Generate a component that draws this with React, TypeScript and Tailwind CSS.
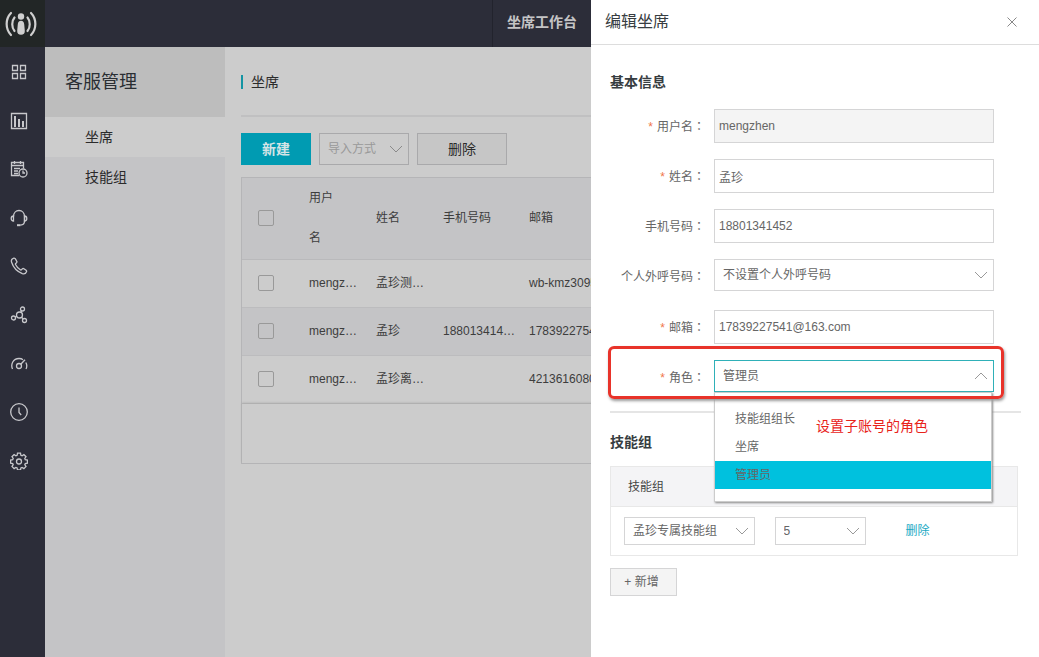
import { useState } from "react";
import type { ReactNode } from "react";

const agents = [
  { user: "mengzhen", shown: "mengz…", name: "孟珍测…", phone: "", email: "wb-kmz309541" },
  { user: "mengzhen2", shown: "mengz…", name: "孟珍", phone: "188013414…", email: "17839227541" },
  { user: "mengzhen3", shown: "mengz…", name: "孟珍离…", phone: "", email: "4213616080" },
];

const roles = ["技能组组长", "坐席", "管理员"];

function Chevron({ up = false }: { up?: boolean }) {
  return (
    <svg
      width="14"
      height="8"
      viewBox="0 0 14 8"
      fill="none"
      stroke="currentColor"
      className="pointer-events-none absolute right-1.5 top-1/2 -translate-y-1/2"
    >
      <path d={up ? "M1 7L7 1L13 7" : "M1 1L7 7L13 1"} />
    </svg>
  );
}

function Logo() {
  return (
    <svg width="32" height="26" viewBox="0 0 32 26" fill="none" stroke="#cfcfcf" strokeLinecap="round">
      <circle cx="16" cy="5.500" r="3.200" fill="#cfcfcf" stroke="none" />
      <path
        d="M16 9.800c2 0 3 1.400 3.200 3.400l.6 6.600c.2 2.400-1.300 4-3.800 4s-4-1.600-3.800-4l.6-6.600c.2-2 1.200-3.400 3.200-3.400z"
        fill="#cfcfcf"
        stroke="none"
      />
      <path d="M6 2C.2 8 .2 18 6 24M26 2c5.800 6 5.800 16 0 22" strokeWidth="2.200" />
      <path d="M9.500 6.500c-3 3.500-3 10 0 13.500M22.500 6.500c3 3.500 3 10 0 13.500" strokeWidth="2.200" />
    </svg>
  );
}

function Glyph({ children }: { children: ReactNode }) {
  return (
    <svg width="18" height="18" viewBox="0 0 18 18" fill="none" stroke="currentColor" strokeWidth="1.300">
      {children}
    </svg>
  );
}

const menu = [
  {
    label: "概览",
    icon: (
      <Glyph>
        <path d="M2.500 2.500h5v5h-5zM10.500 2.500h5v5h-5zM2.500 10.500h5v5h-5zM10.500 10.500h5v5h-5z" />
      </Glyph>
    ),
  },
  {
    label: "报表",
    icon: (
      <Glyph>
        <path d="M1.500 1.500h15v15h-15z" />
        <path d="M5 4v11M9 7v8M13 9v6" strokeWidth="2" />
      </Glyph>
    ),
  },
  {
    label: "记录",
    icon: (
      <Glyph>
        <path d="M9 15.500H1.500v-13h12v6M4.500 1v3M10.500 1v3M1.500 5.500h12M4 8.500h6M4 11h4M4 13.500h4" />
        <circle cx="13" cy="13" r="4" />
        <path d="M13 10.500V13h2" />
      </Glyph>
    ),
  },
  {
    label: "服务",
    icon: (
      <Glyph>
        <path d="M3.500 7.500C3.500 3.800 6 1.500 9 1.500s5.500 2.300 5.500 6v4.500c0 2.500-1.500 4-4 4" />
        <path d="M3.500 7v5C2 12 1.200 11 1.200 9.500S2 7 3.500 7zM14.500 7v5c1.500 0 2.300-1 2.300-2.500S16 7 14.500 7z" />
        <path d="M7 16.200h3.500" strokeWidth="2" />
      </Glyph>
    ),
  },
  {
    label: "电话",
    icon: (
      <Glyph>
        <path d="M3.200 1.300C1.600 2 1 3.400 1.600 5.200c1.600 5 5.500 9.200 10.700 11.400 1.800.6 3.500-.2 4.200-1.900.3-.7.1-1.100-.4-1.500l-2.200-1.500c-.6-.4-1.100-.3-1.600.2l-.8.9c-.4.300-.800.300-1.200 0-2.200-1.400-3.700-3.100-4.800-5.300-.2-.4-.1-.8.200-1.100l.8-.7c.5-.5.6-1 .2-1.600L5.200 1.700c-.5-.6-1.200-.8-2-.4z" />
      </Glyph>
    ),
  },
  {
    label: "路由",
    icon: (
      <Glyph>
        <circle cx="9.500" cy="9" r="3" />
        <circle cx="12.500" cy="3" r="2" />
        <circle cx="3.500" cy="12" r="2" />
        <circle cx="14.500" cy="14.500" r="2" />
        <path d="M10.800 6.300l.8-1.500M6.700 10.200l-1.400.8M11.600 11.200l1.500 1.700" />
      </Glyph>
    ),
  },
  {
    label: "监控",
    icon: (
      <Glyph>
        <path d="M2.500 14C.5 9.500 3 3.500 9 3.500c1.500 0 3 .4 4 1.200M15.800 7.500c1.200 2 1.200 4.500.2 6.500" />
        <circle cx="9" cy="11" r="2.500" />
        <path d="M10.800 9.200L15 4.800" />
      </Glyph>
    ),
  },
  {
    label: "历史",
    icon: (
      <Glyph>
        <circle cx="9" cy="9" r="8.300" />
        <path d="M9 4.500v5l2.200 2.500" />
      </Glyph>
    ),
  },
  {
    label: "设置",
    icon: (
      <Glyph>
        <path d="M7.500 1.200h3l.4 2.100 1.200.5 1.800-1.200 2.100 2.100-1.200 1.800.5 1.200 2.100.4v3l-2.100.4-.5 1.200 1.200 1.800-2.100 2.100-1.800-1.200-1.200.5-.4 2.100h-3l-.4-2.100-1.200-.5-1.800 1.200L2 14.500l1.200-1.800-.5-1.200-2.100-.4v-3l2.100-.4.500-1.200L2 4.700l2.100-2.100 1.800 1.200 1.200-.5z" />
        <circle cx="9" cy="9.500" r="2.500" />
      </Glyph>
    ),
  },
];

function Field({
  id,
  label,
  required = false,
  children,
}: {
  id: string;
  label: string;
  required?: boolean;
  children: ReactNode;
}) {
  return (
    <div className="flex h-[34px] items-start">
      <label htmlFor={id} className="w-[104px] shrink-0 pr-[9px] text-right leading-[34px]">
        {required && <span className="mr-1 text-[#f0764a]">*</span>}
        {label}
        <span className="font-['Noto_Sans_CJK_TC',sans-serif]">：</span>
      </label>
      {children}
    </div>
  );
}

const inputClass = "h-[34px] w-[280px] border border-[#d5d5d6] px-1 text-[#666] outline-none";

function Sidebar() {
  return (
    <aside className="w-[45px] shrink-0 bg-[#2c2d39]">
      <div className="flex h-[47px] items-center justify-center bg-[#222626] pr-1">
        <Logo />
      </div>
      <nav className="grid h-[438px] grid-rows-9 pt-px text-[#c8c8cc]">
        {menu.map((item) => (
          <a key={item.label} href="#" aria-label={item.label} className="flex items-center pl-2.5">
            {item.icon}
          </a>
        ))}
      </nav>
    </aside>
  );
}

function AgentTable() {
  return (
    <div className="mt-3 w-[800px] border border-[#b5b5b7]">
      <table className="w-full table-fixed text-left text-xs text-[#3d3d3d]">
        <colgroup>
          <col className="w-[51px]" />
          <col className="w-[67px]" />
          <col className="w-[67px]" />
          <col className="w-[86px]" />
          <col />
        </colgroup>
        <thead>
          <tr className="h-[81px] border-b border-[#b9b9bb] bg-[#c4c4c6]">
            <th className="pl-4">
              <input
                type="checkbox"
                aria-label="全选"
                className="block size-4 appearance-none rounded-xs border border-[#999]"
              />
            </th>
            <th className="pl-4 font-normal leading-10">
              用户
              <br />名
            </th>
            <th className="pl-4 font-normal">姓名</th>
            <th className="pl-4 font-normal">手机号码</th>
            <th className="pl-4 font-normal">邮箱</th>
          </tr>
        </thead>
        <tbody>
          {agents.map((agent) => (
            <tr key={agent.user} className="h-12 border-b border-[#bcbcbe] even:bg-[#c4c4c6]">
              <td className="pl-4">
                <input
                  type="checkbox"
                  aria-label={agent.user}
                  className="block size-4 appearance-none rounded-xs border border-[#999]"
                />
              </td>
              <td className="whitespace-nowrap pl-4">{agent.shown}</td>
              <td className="whitespace-nowrap pl-4">{agent.name}</td>
              <td className="whitespace-nowrap pl-4">{agent.phone}</td>
              <td className="whitespace-nowrap pl-4">{agent.email}</td>
            </tr>
          ))}
        </tbody>
      </table>
      <div className="h-[59px] shadow-[0_-1px_2px_#aaa]" />
    </div>
  );
}

function Console() {
  return (
    <div className="flex min-w-0 flex-1 flex-col overflow-hidden">
      <header className="flex h-[47px] shrink-0 justify-end bg-[#2c2d39]">
        <a
          href="#"
          className="flex items-center border-l border-[#22232d] px-3.5 pb-1 text-sm font-bold text-[#c4c4c6]"
        >
          坐席工作台
        </a>
      </header>
      <div className="flex flex-1">
        <nav className="w-[180px] shrink-0 bg-[#c4c4c6] text-sm text-[#2b2b2b]">
          <h2 className="flex h-[70px] items-center bg-[#bdbdbd] pl-5 text-lg text-[#2a2e33]">客服管理</h2>
          <a href="#" className="flex h-10 items-center bg-[#ccc] pl-10">
            坐席
          </a>
          <a href="#" className="flex h-10 items-center pl-10">
            技能组
          </a>
        </nav>
        <main className="min-w-0 flex-1 overflow-hidden bg-[#ccc] pl-4">
          <div className="flex h-[70px] items-center border-b-2 border-[#c0c0c1] pt-0.5">
            <h1 className="flex h-3.5 items-center border-l-2 border-[#1394a3] pl-2 text-sm text-[#2b2b2b]">坐席</h1>
          </div>
          <div className="mt-4 flex gap-2 text-sm">
            <button className="h-8 w-[70px] shrink-0 bg-[#009bb2] font-bold text-[#d4e4e6]">新建</button>
            <div className="relative w-[90px] shrink-0 text-[#8a8a8a]">
              <select
                aria-label="导入方式"
                className="h-8 w-full appearance-none border border-[#a9a9ab] pl-2 text-xs text-[#999]"
              >
                <option>导入方式</option>
              </select>
              <Chevron />
            </div>
            <button className="h-8 w-[90px] shrink-0 border border-[#a9a9ab] bg-[#c6c6c6] text-[#2b2b2b]">删除</button>
          </div>
          <AgentTable />
        </main>
      </div>
    </div>
  );
}

function EditDrawer() {
  const [role, setRole] = useState("管理员");

  return (
    <section className="flex w-[448px] shrink-0 flex-col bg-white text-xs text-[#666]">
      <header className="flex h-[45px] items-center justify-between border-b border-[#ddd] pl-3.5 pr-[22px]">
        <h2 className="text-base text-[#373d41]">编辑坐席</h2>
        <button aria-label="关闭" className="text-[#888]">
          <svg width="10" height="10" viewBox="0 0 10 10" stroke="currentColor">
            <path d="M.5.5l9 9M9.500.5l-9 9" />
          </svg>
        </button>
      </header>
      <div className="pl-[19px] pr-[21px] pt-[27px]">
        <h3 className="text-sm font-bold text-[#373d41]">基本信息</h3>
        <form className="mt-[17px] flex flex-col gap-4">
          <Field id="username" label="用户名" required>
            <input id="username" disabled defaultValue="mengzhen" className={inputClass + " bg-[#f4f4f4]"} />
          </Field>
          <Field id="name" label="姓名" required>
            <input id="name" defaultValue="孟珍" className={inputClass} />
          </Field>
          <Field id="phone" label="手机号码">
            <input id="phone" defaultValue="18801341452" className={inputClass} />
          </Field>
          <Field id="outbound" label="个人外呼号码">
            <div className="relative w-[280px] text-[#999]">
              <select
                id="outbound"
                className="h-8 w-full appearance-none border border-[#d5d5d6] pl-2 text-[#666] outline-none"
              >
                <option>不设置个人外呼号码</option>
              </select>
              <Chevron />
            </div>
          </Field>
          <div className="mt-px flex flex-col gap-4">
            <Field id="email" label="邮箱" required>
              <input id="email" type="email" defaultValue="17839227541@163.com" className={inputClass} />
            </Field>
            <div className="relative">
              <Field id="role" label="角色" required>
                <div className="relative w-[280px] text-[#999]">
                  <select
                    id="role"
                    value={role}
                    onChange={(e) => setRole(e.target.value)}
                    className="h-8 w-full appearance-none border border-[#2fb0b8] pl-2 text-[#666] outline-none"
                  >
                    {roles.map((r) => (
                      <option key={r}>{r}</option>
                    ))}
                  </select>
                  <Chevron up />
                  <ul className="absolute left-0 top-full z-10 w-[278px] border border-[#ccc] bg-white py-3 text-[#666] shadow-[1px_1px_2px_#888]">
                    {roles.map((r) => (
                      <li key={r} className={r === role ? "bg-[#00c1de]" : ""}>
                        <button type="button" onClick={() => setRole(r)} className="block h-7 w-full pl-5 text-left">
                          {r}
                        </button>
                      </li>
                    ))}
                  </ul>
                  <p className="absolute left-[102px] top-14 z-20 whitespace-nowrap text-sm text-[#e8231a]">
                    设置子账号的角色
                  </p>
                </div>
              </Field>
              <div className="pointer-events-none absolute -left-0.5 -top-3.5 z-20 h-[53px] w-[396px] rounded-md border-3 border-[#e8332a] shadow-[1px_2px_3px_#999]" />
            </div>
          </div>
        </form>
        <hr className="mt-[17px] -mr-[3px] border-t-2 border-[#e5e5e5]" />
        <h3 className="mt-[19px] text-sm font-bold text-[#373d41]">技能组</h3>
        <table className="mt-3.5 w-full table-fixed border border-[#e8e8e8] text-left">
          <colgroup>
            <col className="w-[154px]" />
            <col className="w-[131px]" />
            <col />
          </colgroup>
          <thead>
            <tr className="h-10 border-b border-[#e8e8e8] bg-[#f4f4f6] text-[#444]">
              <th className="pl-[17px] font-normal">技能组</th>
              <th className="font-normal" />
              <th className="font-normal" />
            </tr>
          </thead>
          <tbody>
            <tr className="h-[49px]">
              <td className="pl-[13px]">
                <div className="relative w-[131px] text-[#999]">
                  <select
                    aria-label="技能组"
                    className="block h-7 w-full appearance-none border border-[#d5d5d6] pl-2 text-[#666]"
                  >
                    <option>孟珍专属技能组</option>
                  </select>
                  <Chevron />
                </div>
              </td>
              <td className="pl-[10px]">
                <div className="relative w-[91px] text-[#999]">
                  <select
                    aria-label="优先级"
                    defaultValue="5"
                    className="block h-7 w-full appearance-none border border-[#d5d5d6] pl-2 text-[#666]"
                  >
                    <option>5</option>
                  </select>
                  <Chevron />
                </div>
              </td>
              <td className="pl-2.5">
                <a href="#" className="text-[#1ba9c4]">
                  删除
                </a>
              </td>
            </tr>
          </tbody>
        </table>
        <button className="mt-3 h-7 w-[67px] border border-[#d5d5d6] bg-[#f4f4f4] pr-1">+ 新增</button>
      </div>
    </section>
  );
}

export default function App() {
  return (
    <div className="flex min-h-screen font-['Liberation_Sans','Noto_Sans_CJK_SC',sans-serif]">
      <Sidebar />
      <Console />
      <EditDrawer />
    </div>
  );
}
